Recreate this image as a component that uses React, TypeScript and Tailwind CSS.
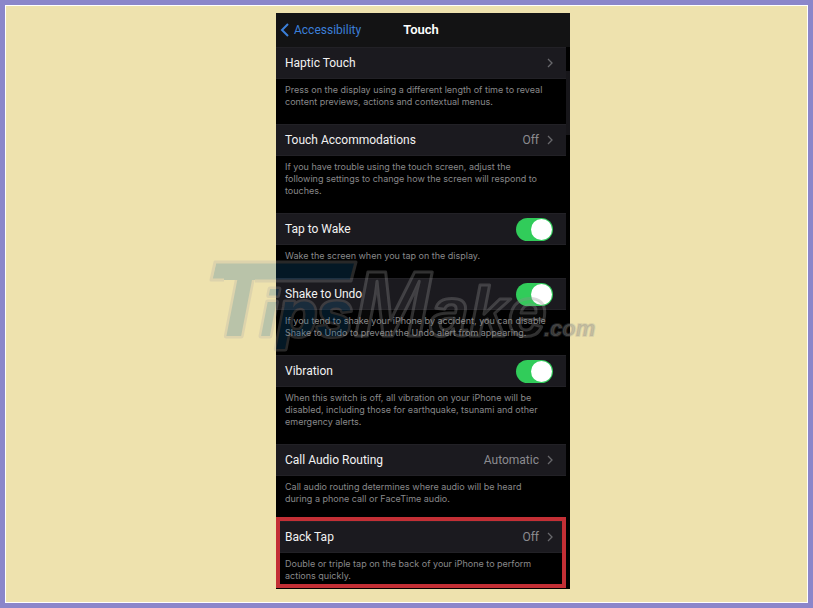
import * as React from 'react';
import clsx from 'clsx';

interface Setting {
  id: string;
  label: string;
  note: string[];
  value?: string;
  toggle?: boolean;
  highlighted?: boolean;
}

const settings: Setting[] = [
  {
    id: 'haptic-touch',
    label: 'Haptic Touch',
    note: [
      'Press on the display using a different length of time to reveal',
      'content previews, actions and contextual menus.',
    ],
  },
  {
    id: 'touch-accommodations',
    label: 'Touch Accommodations',
    value: 'Off',
    note: [
      'If you have trouble using the touch screen, adjust the',
      'following settings to change how the screen will respond to',
      'touches.',
    ],
  },
  {
    id: 'tap-to-wake',
    label: 'Tap to Wake',
    toggle: true,
    note: ['Wake the screen when you tap on the display.'],
  },
  {
    id: 'shake-to-undo',
    label: 'Shake to Undo',
    toggle: true,
    note: [
      'If you tend to shake your iPhone by accident, you can disable',
      'Shake to Undo to prevent the Undo alert from appearing.',
    ],
  },
  {
    id: 'vibration',
    label: 'Vibration',
    toggle: true,
    note: [
      'When this switch is off, all vibration on your iPhone will be',
      'disabled, including those for earthquake, tsunami and other',
      'emergency alerts.',
    ],
  },
  {
    id: 'call-audio-routing',
    label: 'Call Audio Routing',
    value: 'Automatic',
    note: [
      'Call audio routing determines where audio will be heard',
      'during a phone call or FaceTime audio.',
    ],
  },
  {
    id: 'back-tap',
    label: 'Back Tap',
    value: 'Off',
    highlighted: true,
    note: [
      'Double or triple tap on the back of your iPhone to perform',
      'actions quickly.',
    ],
  },
];

const rowClass =
  'flex h-8 w-full items-center justify-between border-y border-[#222126] bg-[#1b1a1f] pl-[9px] pr-[13px] text-left text-[#f2f2f2]';

function Chevron() {
  return (
    <svg width="6" height="10" viewBox="0 0 6 10" fill="none" stroke="#68686c" strokeWidth="1.3" aria-hidden="true">
      <path d="M1 1l4 4-4 4" />
    </svg>
  );
}

function SettingSection({ setting }: { setting: Setting }) {
  const [on, setOn] = React.useState(true);
  const { id, label, value, note, toggle, highlighted } = setting;

  return (
    <section className="relative">
      {toggle ? (
        <div className={rowClass}>
          <label htmlFor={id}>{label}</label>
          <span className="relative flex">
            <input
              id={id}
              type="checkbox"
              role="switch"
              checked={on}
              onChange={(e) => setOn(e.target.checked)}
              className="peer h-[23px] w-[37px] appearance-none rounded-full bg-[#39393d] checked:bg-[#31cc5a]"
            />
            <span className="pointer-events-none absolute left-px top-px size-[21px] rounded-full bg-white peer-checked:left-auto peer-checked:right-px" />
          </span>
        </div>
      ) : (
        <button type="button" id={id} className={rowClass}>
          <span>{label}</span>
          <span className="flex items-center gap-2 text-[#8b8b90]">
            {value}
            <Chevron />
          </span>
        </button>
      )}
      <p
        className={clsx(
          'whitespace-nowrap pl-[9px] pt-[5px] font-[Inter,sans-serif] text-[9px] leading-3 text-[#88888a]',
          highlighted ? 'pb-1.5' : 'pb-4'
        )}
      >
        {note.map((line) => (
          <span key={line} className="block">
            {line}
          </span>
        ))}
      </p>
      {highlighted && (
        <div className="pointer-events-none absolute inset-x-0 -top-1 bottom-0 border-4 border-[#c32f35]" />
      )}
    </section>
  );
}

function Watermark() {
  return (
    <svg
      className="pointer-events-none absolute -left-[70px] top-[224px]"
      width="420"
      height="132"
      viewBox="0 -20 420 132"
      fontFamily="'Liberation Sans', Arial, sans-serif"
      fontWeight="bold"
      fontStyle="italic"
      strokeLinejoin="round"
      aria-hidden="true"
    >
      {/* the T's crossbar runs on over the next letters */}
      <g opacity="0.24" fill="#14659a" stroke="#a8a8a8" strokeWidth="4" paintOrder="stroke">
        <text x="2" y="79" fontSize="102" strokeWidth="5">T</text>
        <path d="M10 6h139l-5 17H6z" stroke="none" />
        <path d="M18 23H5L9 5h141l-5 19H49" fill="none" strokeWidth="3" />
        <text x="54" y="79" fontSize="64" strokeWidth="5">ips</text>
      </g>
      <g fill="#808080" fillOpacity="0.06" stroke="#909090" strokeOpacity="0.32" strokeWidth="3">
        <text x="148" y="79" fontSize="92">M</text>
        <text x="224" y="79" fontSize="70">ake</text>
      </g>
      <text x="338" y="79" fontSize="22" fill="#8a8a8a" fillOpacity="0.4" stroke="#8a8a8a" strokeOpacity="0.2" strokeWidth="2">.com</text>
    </svg>
  );
}

export default function App() {
  return (
    <div className="flex min-h-screen border-[5px] border-[#8b86ca] bg-[#eee2ae] font-[Roboto,sans-serif]">
      <div className="flex flex-1 items-start justify-center border border-white pl-[33px] pt-[7px]">
        <main className="relative w-full max-w-[294px] bg-black pb-px text-xs leading-4">
          <header className="grid h-[34px] grid-cols-[1fr_auto_1fr] items-center bg-[#131314] pl-1 pr-2">
            <a href="#accessibility" className="flex items-center gap-[5px] text-[#3b7fd9]">
              <svg width="9" height="14" viewBox="0 0 9 14" fill="none" stroke="currentColor" strokeWidth="2" aria-hidden="true">
                <path d="M8 1L2 7l6 6" />
              </svg>
              Accessibility
            </a>
            <h1 className="text-[13px] font-semibold text-white">Touch</h1>
          </header>
          <div className="flex">
            <div className="flex-1">
              {settings.map((setting) => (
                <SettingSection key={setting.id} setting={setting} />
              ))}
            </div>
            <div className="w-1 pt-6">
              <div className="h-16 bg-[#17161a]" />
            </div>
          </div>
          <Watermark />
        </main>
      </div>
    </div>
  );
}
